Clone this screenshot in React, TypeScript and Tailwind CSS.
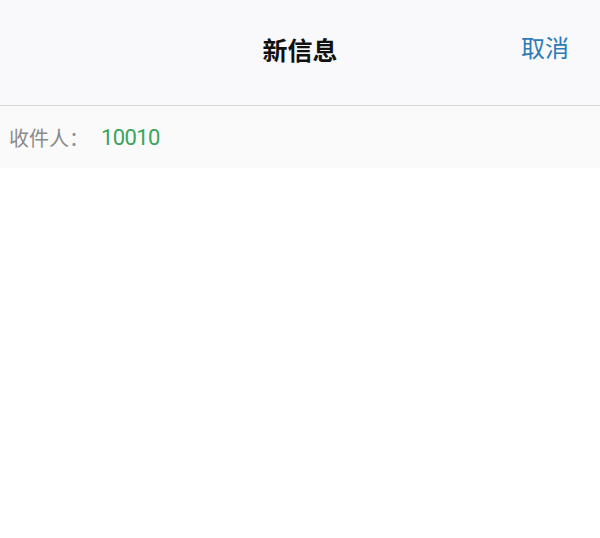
export default function App() {
  const font = { fontFamily: '"Noto Sans CJK SC", "Liberation Sans", sans-serif' };
  return (
    <div className="w-[600px] h-[538px] bg-white" style={font}>
      <div className="h-[106px] bg-[#f9f8fa] border-b border-[#d6d5d8] flex items-center relative">
        <div className="flex-1 text-center text-[25px] font-bold text-[#111] leading-none -mt-[6px]">新信息</div>
        <div className="absolute right-[31px] top-[35px] text-[24px] text-[#2b7cb8] leading-none">取消</div>
      </div>
      <div className="h-[63px] bg-[#fbfafb] flex items-center pl-[9px] -mt-[1px]">
        <span className="text-[20px] text-[#8a8a8a] leading-none mt-[2px]">收件人：</span>
        <span className="ml-[12px] text-[22px] tracking-[-0.6px] text-[#3aa35c] leading-none mt-[2px]" style={{ fontFamily: 'Roboto, "Liberation Sans", sans-serif' }}>10010</span>
      </div>
    </div>
  );
}
